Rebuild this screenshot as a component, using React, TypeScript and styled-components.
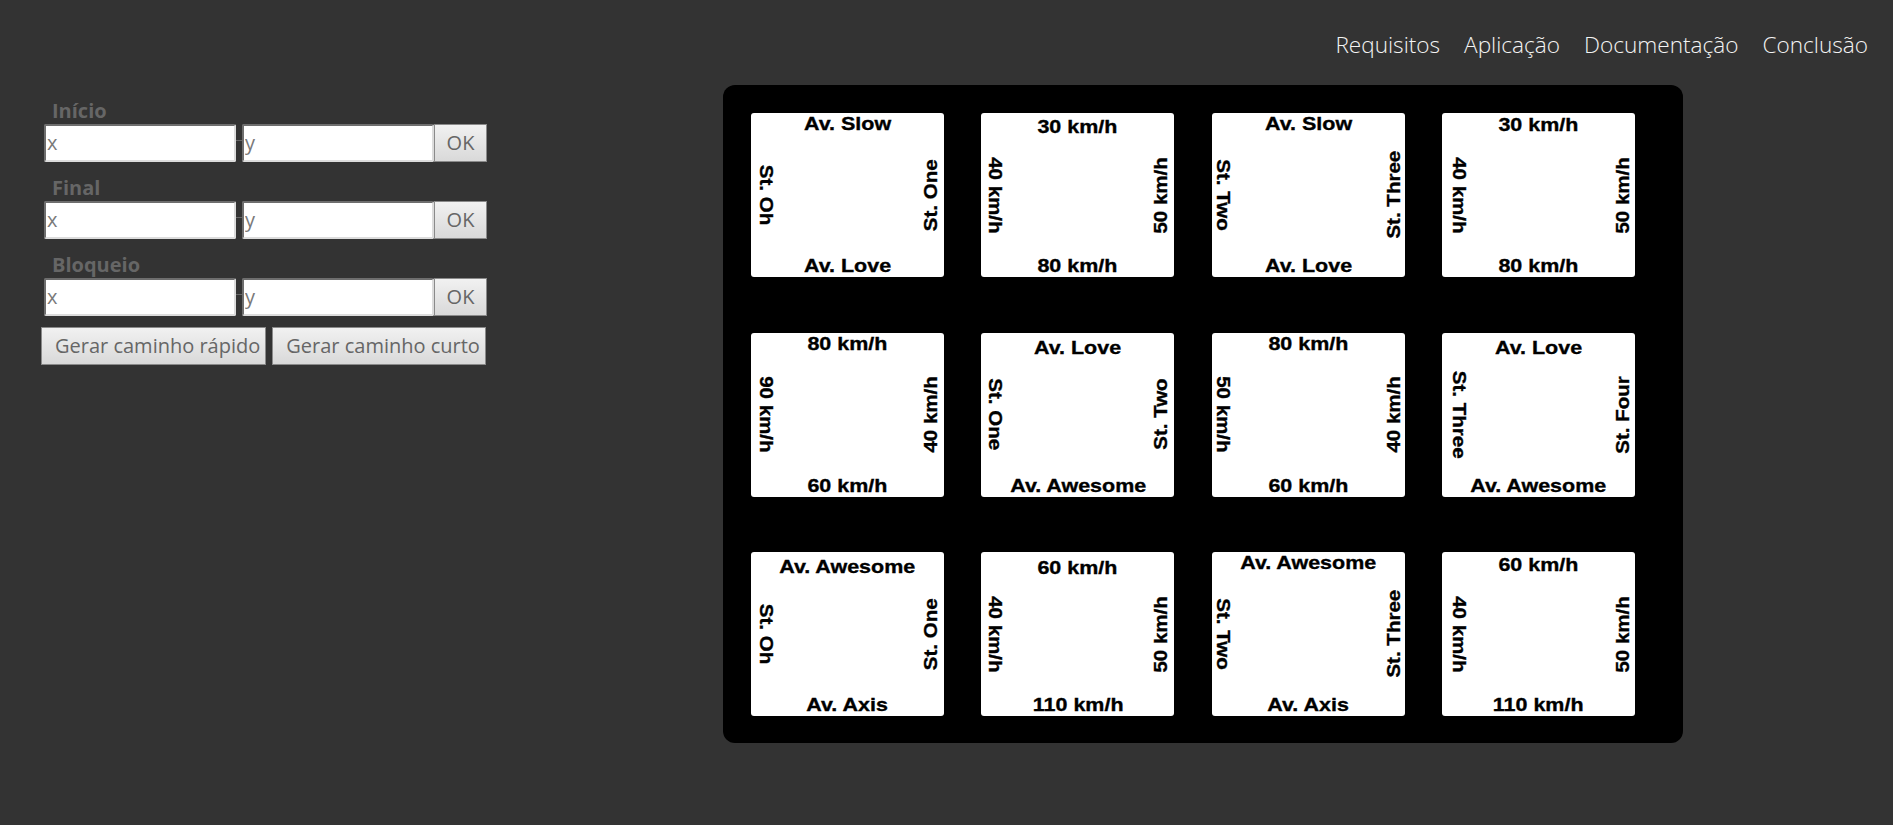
import React from "react";
import styled, { createGlobalStyle } from "styled-components";

const GlobalStyle = createGlobalStyle`
  html, body { margin: 0; padding: 0; background: #333333; }
  body { font-family: "Open Sans", "Liberation Sans", sans-serif; }
`;

const Page = styled.div`
  min-height: 100vh;
  background: #333333;
`;

const Header = styled.header`
  display: flex;
  justify-content: flex-end;
  padding: 30px 25px 0 0;
  height: 30px;
`;

const Nav = styled.nav`
  display: flex;
  gap: 24px;
`;

const NavLink = styled.a`
  font-family: "Open Sans", sans-serif;
  font-weight: 300;
  font-size: 22.6px;
  line-height: 30px;
  color: #f4f4f4;
  text-decoration: none;
  white-space: nowrap;
`;

const Main = styled.main`
  display: flex;
  align-items: flex-start;
  padding-top: 25px;
`;

const Form = styled.div`
  width: 447px;
  margin-left: 41px;
  margin-top: 12.5px;
  display: flex;
  flex-direction: column;
`;

const Group = styled.div`
  display: flex;
  flex-direction: column;
  & + & { margin-top: 13px; }
`;

const GroupLabel = styled.label`
  font-family: "Open Sans", sans-serif;
  font-weight: 700;
  font-size: 20px;
  line-height: 26px;
  color: #666666;
  padding-left: 11px;
`;

const FieldRow = styled.div`
  display: flex;
  align-items: stretch;
  height: 38px;
  margin-left: 3px;
`;

const CoordInput = styled.input`
  box-sizing: border-box;
  width: 192px;
  height: 38px;
  margin: 0;
  padding: 0 1px;
  border: 2px solid;
  border-color: #6e6e6e #dcdcdc #dcdcdc #6e6e6e;
  border-radius: 2px;
  background: #ffffff;
  font-family: "Open Sans", sans-serif;
  font-size: 20px;
  color: #555555;
  outline: none;
  &::placeholder { color: #7a7a7a; }
`;

const Dash = styled.span`
  width: 6px;
  height: 1px;
  background: #666666;
  align-self: center;
  margin-bottom: 5px;
`;

const ButtonBase = styled.button`
  box-sizing: border-box;
  height: 38px;
  margin: 0;
  border: 1px solid #8a8a8a;
  border-radius: 0;
  background: linear-gradient(#f1f1f1, #d9d9d9);
  color: #666666;
  font-family: "Open Sans", sans-serif;
  font-size: 20px;
  line-height: 1;
  cursor: pointer;
  white-space: nowrap;
`;

const OkButton = styled(ButtonBase)`
  width: 53px;
  padding: 0;
`;

const Actions = styled.div`
  display: flex;
  gap: 6.6px;
  margin-top: 11px;
`;

const ActionButton = styled(ButtonBase)<{ $w: number }>`
  width: ${(p) => p.$w}px;
  padding: 0 0 0 13px;
  text-align: left;
`;

const Board = styled.div`
  box-sizing: border-box;
  width: 960px;
  margin-left: 235px;
  background: #000000;
  border-radius: 12px;
  padding: 28px 48px 27px 28px;
  display: grid;
  grid-template-columns: repeat(4, 193px);
  column-gap: 37.33px;
  row-gap: 55.5px;
`;

const Tile = styled.div`
  background: #ffffff;
  border-radius: 3px;
  height: 164px;
  display: grid;
  grid-template-columns: auto 1fr auto;
  grid-template-rows: auto 1fr auto;
  font-family: "Liberation Sans", Arial, sans-serif;
  font-weight: 700;
  font-size: 19px;
  line-height: 19px;
  color: #000000;
  -webkit-text-stroke: 0.35px #000000;
  overflow: hidden;
`;

const HLabel = styled.div<{ $pos: "top" | "bottom"; $pad: number }>`
  grid-column: 1 / -1;
  grid-row: ${(p) => (p.$pos === "top" ? 1 : 3)};
  justify-self: center;
  white-space: nowrap;
  transform: scaleX(1.13);
  ${(p) => (p.$pos === "top" ? `padding-top: ${p.$pad}px;` : `padding-bottom: ${p.$pad}px;`)}
`;

const VLabel = styled.div<{ $side: "left" | "right"; $inset: number }>`
  grid-row: 1 / -1;
  grid-column: ${(p) => (p.$side === "left" ? 1 : 3)};
  align-self: center;
  writing-mode: vertical-rl;
  white-space: nowrap;
  ${(p) => (p.$side === "left" ? `margin-left: ${p.$inset}px;` : `margin-right: ${p.$inset}px;`)}
  transform: ${(p) => (p.$side === "left" ? "scaleY(1.08)" : "rotate(180deg) scaleY(1.08)")};
`;

type TileData = { t: string; l: string; r: string; b: string; pt: number };

const rows: TileData[][] = [
  [
    { t: "Av. Slow", l: "St. Oh", r: "St. One", b: "Av. Love", pt: 0.5 },
    { t: "30 km/h", l: "40 km/h", r: "50 km/h", b: "80 km/h", pt: 3.5 },
    { t: "Av. Slow", l: "St. Two", r: "St. Three", b: "Av. Love", pt: 0.5 },
    { t: "30 km/h", l: "40 km/h", r: "50 km/h", b: "80 km/h", pt: 2 },
  ],
  [
    { t: "80 km/h", l: "90 km/h", r: "40 km/h", b: "60 km/h", pt: 1.5 },
    { t: "Av. Love", l: "St. One", r: "St. Two", b: "Av. Awesome", pt: 5 },
    { t: "80 km/h", l: "50 km/h", r: "40 km/h", b: "60 km/h", pt: 1.5 },
    { t: "Av. Love", l: "St. Three", r: "St. Four", b: "Av. Awesome", pt: 5 },
  ],
  [
    { t: "Av. Awesome", l: "St. Oh", r: "St. One", b: "Av. Axis", pt: 4.5 },
    { t: "60 km/h", l: "40 km/h", r: "50 km/h", b: "110 km/h", pt: 5.5 },
    { t: "Av. Awesome", l: "St. Two", r: "St. Three", b: "Av. Axis", pt: 1 },
    { t: "60 km/h", l: "40 km/h", r: "50 km/h", b: "110 km/h", pt: 3 },
  ],
];

const leftInset = [6, 5, 2.5, 8];
const rightInset = [4, 4, 2, 3];

const groups = ["Início", "Final", "Bloqueio"];

export default function App() {
  return (
    <Page>
      <GlobalStyle />
      <Header>
        <Nav>
          <NavLink href="#requisitos">Requisitos</NavLink>
          <NavLink href="#aplicacao">Aplicação</NavLink>
          <NavLink href="#documentacao">Documentação</NavLink>
          <NavLink href="#conclusao">Conclusão</NavLink>
        </Nav>
      </Header>
      <Main>
        <Form>
          {groups.map((g) => (
            <Group key={g}>
              <GroupLabel>{g}</GroupLabel>
              <FieldRow>
                <CoordInput placeholder="x" />
                <Dash />
                <CoordInput placeholder="y" />
                <OkButton>OK</OkButton>
              </FieldRow>
            </Group>
          ))}
          <Actions>
            <ActionButton $w={224.7}>Gerar caminho rápido</ActionButton>
            <ActionButton $w={213.4}>Gerar caminho curto</ActionButton>
          </Actions>
        </Form>
        <Board>
          {rows.map((row, ri) =>
            row.map((tile, ci) => (
              <Tile key={`${ri}-${ci}`}>
                <HLabel $pos="top" $pad={tile.pt}>{tile.t}</HLabel>
                <VLabel $side="left" $inset={leftInset[ci]}>{tile.l}</VLabel>
                <VLabel $side="right" $inset={rightInset[ci]}>{tile.r}</VLabel>
                <HLabel $pos="bottom" $pad={1.6}>{tile.b}</HLabel>
              </Tile>
            ))
          )}
        </Board>
      </Main>
    </Page>
  );
}
